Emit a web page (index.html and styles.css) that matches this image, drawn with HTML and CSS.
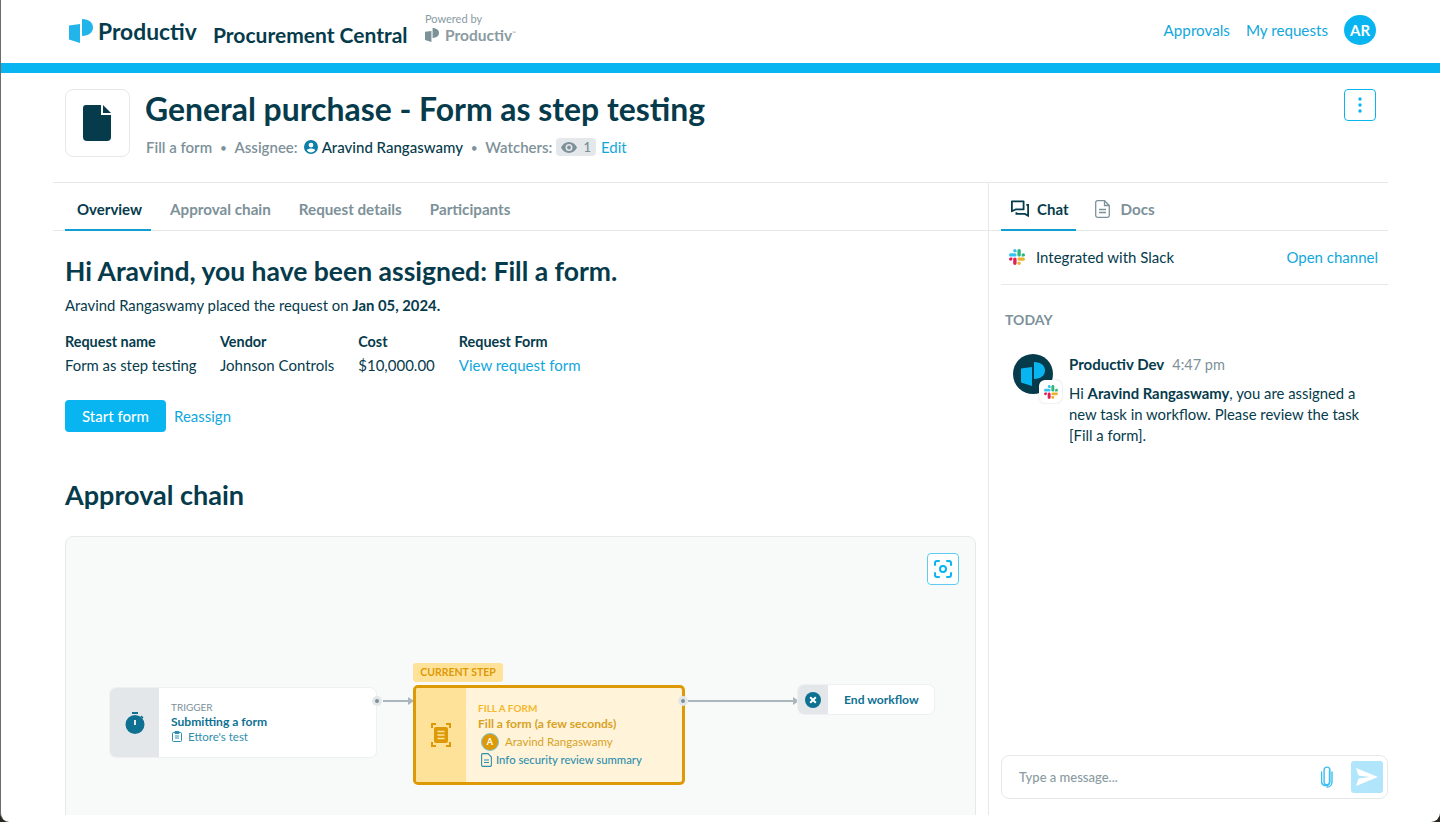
FILE: index.html
```html
<!DOCTYPE html>
<html lang="en">
<head>
    <meta charset="UTF-8">
    <meta name="viewport" content="width=device-width, initial-scale=1.0">
    <title>General purchase - Procurement Central</title>
    <link rel="stylesheet" href="styles.css">
</head>

<body>
    <svg class="defs" width="0" height="0">
        <symbol id="slack" viewBox="0 0 122.8 122.8">
            <path fill="#e01e5a" d="M25.8 77.6c0 7.1-5.8 12.9-12.9 12.9S0 84.7 0 77.6s5.8-12.9 12.9-12.9h12.9v12.9zM32.3 77.6c0-7.1 5.8-12.9 12.9-12.9s12.9 5.8 12.9 12.9v32.3c0 7.1-5.8 12.9-12.9 12.9s-12.9-5.8-12.9-12.9V77.6z"/>
            <path fill="#36c5f0" d="M45.2 25.8c-7.1 0-12.9-5.8-12.9-12.9S38.1 0 45.2 0s12.9 5.8 12.9 12.9v12.9H45.2zM45.2 32.3c7.1 0 12.9 5.8 12.9 12.9s-5.8 12.9-12.9 12.9H12.9C5.8 58.1 0 52.3 0 45.2s5.8-12.9 12.9-12.9h32.3z"/>
            <path fill="#2eb67d" d="M97 45.2c0-7.1 5.8-12.9 12.9-12.9s12.9 5.8 12.9 12.9-5.8 12.9-12.9 12.9H97V45.2zM90.5 45.2c0 7.1-5.8 12.9-12.9 12.9s-12.9-5.8-12.9-12.9V12.9C64.7 5.8 70.5 0 77.6 0s12.9 5.8 12.9 12.9v32.3z"/>
            <path fill="#ecb22e" d="M77.6 97c7.1 0 12.9 5.8 12.9 12.9s-5.8 12.9-12.9 12.9-12.9-5.8-12.9-12.9V97h12.9zM77.6 90.5c-7.1 0-12.9-5.8-12.9-12.9s5.8-12.9 12.9-12.9h32.3c7.1 0 12.9 5.8 12.9 12.9s-5.8 12.9-12.9 12.9H77.6z"/>
        </symbol>
        <symbol id="mark" viewBox="0 0 24 24">
            <path d="M0 6.500 11 5V24L0 20.500Z"/>
            <path d="M13 0C20 0 24 4 24 8.500C24 13 20 17 13 17Z"/>
        </symbol>
    </svg>

    <div class="window">
        <header class="topbar">
            <div class="brand">
                <svg class="brand-mark" width="24" height="24"><use href="#mark"/></svg>
                <span class="brand-name">Productiv</span>
            </div>
            <span class="app-name">Procurement Central</span>
            <div class="powered">
                <span class="powered-label">Powered by</span>
                <div class="powered-logo">
                    <svg width="14" height="14"><use href="#mark"/></svg>
                    <span>Productiv<sup>™</sup></span>
                </div>
            </div>
            <nav class="topnav">
                <a>Approvals</a>
                <a>My requests</a>
                <span class="avatar">AR</span>
            </nav>
        </header>
        <div class="accent"></div>

        <div class="page">
            <section class="title-row">
                <div class="title-icon">
                    <svg width="28" height="36" viewBox="0 0 28 36"><path fill="#063b4c" d="M3 0H18V10H28V32A4 4 0 0 1 24 36H4A4 4 0 0 1 0 32V3A3 3 0 0 1 3 0ZM20 0 28 8H20Z"/></svg>
                </div>
                <div class="title-text">
                    <h1>General purchase - Form as step testing</h1>
                    <div class="meta">
                        <span>Fill a form</span>
                        <span class="dot">•</span>
                        <span>Assignee:</span>
                        <svg class="meta-user" width="14" height="14" viewBox="0 0 14 14"><path fill="#0b7fa8" fill-rule="evenodd" d="M7 0a7 7 0 1 0 0 14A7 7 0 0 0 7 0ZM7 2.700a2.400 2.400 0 1 1 0 4.800 2.400 2.400 0 0 1 0-4.800ZM7 12.400c-1.800 0-3.400-.9-4.300-2.300C3 9 5.600 8.500 7 8.500s4 .5 4.300 1.600C10.400 11.500 8.800 12.400 7 12.400Z"/></svg>
                        <span class="meta-name">Aravind Rangaswamy</span>
                        <span class="dot">•</span>
                        <span>Watchers:</span>
                        <span class="watch-pill">
                            <svg width="16" height="11" viewBox="0 0 16 11"><path fill="#7d9199" fill-rule="evenodd" d="M8 0C4.500 0 1.500 2.200 0 5.500 1.500 8.800 4.500 11 8 11s6.500-2.200 8-5.500C14.500 2.200 11.500 0 8 0Zm0 9a3.500 3.500 0 1 1 0-7 3.500 3.500 0 0 1 0 7Zm0-5.400a1.900 1.900 0 1 0 0 3.800 1.900 1.900 0 0 0 0-3.800Z"/></svg>
                            1
                        </span>
                        <a class="edit">Edit</a>
                    </div>
                </div>
                <button class="kebab">
                    <svg width="4" height="16" viewBox="0 0 4 16"><circle cx="2" cy="2" r="1.700"/><circle cx="2" cy="8" r="1.700"/><circle cx="2" cy="14" r="1.700"/></svg>
                </button>
            </section>

            <div class="split">
                <main class="left">
                    <nav class="tabs">
                        <a class="tab active">Overview</a>
                        <a class="tab">Approval chain</a>
                        <a class="tab">Request details</a>
                        <a class="tab">Participants</a>
                    </nav>
                    <div class="overview">
                        <h2>Hi Aravind, you have been assigned: Fill a form.</h2>
                        <p class="placed">Aravind Rangaswamy placed the request on <b>Jan 05, 2024.</b></p>
                        <div class="facts">
                            <div><b>Request name</b><span>Form as step testing</span></div>
                            <div><b>Vendor</b><span>Johnson Controls</span></div>
                            <div><b>Cost</b><span>$10,000.00</span></div>
                            <div><b>Request Form</b><a>View request form</a></div>
                        </div>
                        <div class="actions">
                            <button class="btn">Start form</button>
                            <a>Reassign</a>
                        </div>
                        <h2 class="chain-title">Approval chain</h2>

                        <div class="canvas">
                            <button class="focus-btn">
                                <svg width="18" height="18" viewBox="0 0 18 18" fill="none" stroke="#08b5f0" stroke-width="2" stroke-linecap="round"><path d="M1 5V3A2 2 0 0 1 3 1H5M13 1H15A2 2 0 0 1 17 3V5M17 13V15A2 2 0 0 1 15 17H13M5 17H3A2 2 0 0 1 1 15V13"/><circle cx="9" cy="9" r="3"/></svg>
                            </button>

                            <div class="node trigger">
                                <div class="node-side">
                                    <svg width="20" height="22" viewBox="0 0 20 22"><path fill="#0e7192" fill-rule="evenodd" d="M7 0H13V2H7ZM10 3a9.500 9.500 0 1 1 0 19 9.500 9.500 0 0 1 0-19ZM9 8V13H11V8ZM16.500 3.500 18.500 5.500 17.300 6.700 15.300 4.700Z"/></svg>
                                </div>
                                <div class="node-body">
                                    <div class="node-kicker">TRIGGER</div>
                                    <div class="node-title">Submitting a form</div>
                                    <div class="node-line">
                                        <svg width="10" height="11" viewBox="0 0 10 11" fill="none" stroke="#2f8fae"><rect x=".5" y="1.500" width="9" height="9" rx="1"/><path d="M3 .5H7V2.500H3ZM3 5H7M3 7H7"/></svg>
                                        Ettore's test
                                    </div>
                                </div>
                            </div>
                            <span class="port port-a"></span>
                            <span class="arrow arrow-a"></span>

                            <div class="step-tag">CURRENT STEP</div>
                            <div class="node step">
                                <div class="node-side">
                                    <svg width="20" height="24" viewBox="0 0 20 24"><path fill="none" stroke="#dd9a06" stroke-width="2" d="M1 5V1H5M15 1H19V5M19 19V23H15M5 23H1V19"/><rect x="3" y="4" width="14" height="16" rx="2" fill="#dd9a06"/><path stroke="#ffe29a" stroke-width="1.400" d="M6.500 8.500H13.500M6.500 12H13.500M6.500 15.500H13.500"/></svg>
                                </div>
                                <div class="node-body">
                                    <div class="node-kicker">FILL A FORM</div>
                                    <div class="node-title">Fill a form (a few seconds)</div>
                                    <div class="node-person"><span class="mini-avatar">A</span>Aravind Rangaswamy</div>
                                    <div class="node-doc">
                                        <svg width="11" height="14" viewBox="0 0 11 14" fill="none" stroke="#2f8fae" stroke-width="1.100"><path d="M1.500.6H7L10.400 4V12A1.400 1.400 0 0 1 9 13.400H2A1.400 1.400 0 0 1 .6 12V1.500ZM3 7H8M3 9.500H8"/></svg>
                                        Info security review summary
                                    </div>
                                </div>
                            </div>
                            <span class="port port-b"></span>
                            <span class="arrow arrow-b"></span>

                            <div class="node end">
                                <div class="node-side">
                                    <svg width="16" height="16" viewBox="0 0 16 16"><circle cx="8" cy="8" r="8" fill="#0e7192"/><path stroke="#fff" stroke-width="2" d="M5.200 5.200 10.800 10.800M10.800 5.200 5.200 10.800"/></svg>
                                </div>
                                <div class="node-title">End workflow</div>
                            </div>
                        </div>
                    </div>
                </main>

                <aside class="right">
                    <nav class="tabs side-tabs">
                        <a class="tab active">
                            <svg width="18" height="18" viewBox="0 0 20 19" fill="none" stroke="#063b4c" stroke-width="2"><path d="M1 1H14V10H5L1 12Z" stroke-linejoin="round"/><path d="M17 5H19V17L15.500 15H6V13"/></svg>
                            Chat
                        </a>
                        <a class="tab">
                            <svg width="15" height="18" viewBox="0 0 15 18" fill="none" stroke="#7d9199" stroke-width="1.300"><path d="M2.500.7H9.500L14.300 5.500V15.500A1.800 1.800 0 0 1 12.500 17.300H2.500A1.800 1.800 0 0 1 .7 15.500V2.500A1.800 1.800 0 0 1 2.500.7ZM4 9.500H11M4 12.500H11M9.500.7V5.500H14.300"/></svg>
                            Docs
                        </a>
                    </nav>
                    <div class="slack-row">
                        <svg width="16" height="16"><use href="#slack"/></svg>
                        <span>Integrated with Slack</span>
                        <a>Open channel</a>
                    </div>
                    <div class="day">TODAY</div>
                    <div class="message">
                        <div class="msg-avatar">
                            <svg width="24" height="24"><use href="#mark"/></svg>
                            <span class="msg-badge"><svg width="14" height="14"><use href="#slack"/></svg></span>
                        </div>
                        <div class="msg-body">
                            <div class="msg-head"><b>Productiv Dev</b><span>4:47 pm</span></div>
                            <p>Hi <b>Aravind Rangaswamy</b>, you are assigned a new task in workflow. Please review the task [Fill a form].</p>
                        </div>
                    </div>
                    <div class="composer">
                        <span class="placeholder">Type a message...</span>
                        <svg class="clip" width="12" height="22" viewBox="0 0 12 22" fill="none" stroke="#3cbff0" stroke-width="1.400" stroke-linecap="round"><path d="M8.500 5V16A2.700 2.700 0 0 1 3.100 16V4A2.900 2.900 0 0 1 8.900 4V16.500A4.300 4.300 0 0 1 .6 16.500V6"/><path d="M11 6V16.500A5 5 0 0 1 6 21"/></svg>
                        <button class="send">
                            <svg width="22" height="18" viewBox="0 0 22 18"><path fill="#fff" d="M0 0 22 9 0 18 2.500 10.500 14 9 2.500 7.500Z"/></svg>
                        </button>
                    </div>
                </aside>
            </div>
        </div>
    </div>
</body>
</html>
```

FILE: styles.css
```css
* {
    box-sizing: border-box;
}

html, body {
    margin: 0;
    padding: 0;
    height: 822px;
    overflow: hidden;
    background: #2a2622;
}

body {
    font-family: 'Lato', sans-serif;
    font-size: 15px;
    color: #063b4c;
}

a {
    color: #12a7dc;
}

button {
    font-family: inherit;
    cursor: pointer;
}

.defs {
    display: block;
    height: 0;
}

.window {
    height: 822px;
    background: #fff;
    border-left: 1px solid #6b6b6b;
    border-radius: 0 0 9px 9px;
    overflow: hidden;
}

/* header */
.topbar {
    height: 63px;
    display: flex;
    align-items: flex-start;
    padding-left: 68px;
    padding-right: 64px;
}

.brand {
    display: flex;
    align-items: flex-start;
    padding-top: 19px;
    width: 144px;
}

.brand-mark {
    fill: #22b5ec;
}

.brand-name {
    font-size: 22.800px;
    font-weight: 700;
    color: #063b4c;
    margin-left: 5px;
    margin-top: 1px;
    line-height: 22px;
}

.app-name {
    font-size: 21px;
    font-weight: 700;
    line-height: 26px;
    margin-top: 22px;
    width: 212px;
}

.powered {
    margin-top: 13px;
    color: #8a9ba2;
}

.powered-label {
    display: block;
    font-size: 11px;
    line-height: 12px;
}

.powered-logo {
    display: flex;
    align-items: center;
    gap: 6px;
    font-size: 15.500px;
    font-weight: 700;
    line-height: 18px;
    margin-top: 1px;
}

.powered-logo svg {
    fill: #7d9199;
}

.powered-logo sup {
    font-size: 5px;
    font-weight: 400;
    line-height: 0;
}

.topnav {
    margin-left: auto;
    display: flex;
    align-items: center;
    gap: 16px;
    margin-top: 15px;
    font-size: 15.200px;
}

.avatar {
    width: 32px;
    height: 30px;
    border-radius: 50%;
    background: #08b5f0;
    color: #fff;
    font-weight: 700;
    font-size: 15px;
    display: flex;
    align-items: center;
    justify-content: center;
}

.accent {
    height: 10px;
    background: #08b5f0;
}

/* title */
.page {
    margin-left: 52px;
    width: 1335px;
}

.title-row {
    height: 110px;
    display: flex;
    padding: 16px 12px 0 12px;
    border-bottom: 1px solid #e6e9ea;
}

.title-icon {
    width: 65px;
    height: 68px;
    border: 1px solid #e6e9ea;
    border-radius: 8px;
    display: flex;
    align-items: center;
    justify-content: center;
    padding-right: 2px;
    margin-right: 15px;
}

h1 {
    margin: 0;
    font-size: 31.900px;
    font-weight: 700;
    line-height: 40px;
}

.meta {
    display: flex;
    align-items: center;
    margin-top: 7px;
    padding-left: 1px;
    color: #7d9199;
    font-weight: 600;
    height: 22px;
}

.dot {
    margin: 0 8px;
    font-size: 11px;
}

.meta-user {
    margin-left: 6px;
}

.meta-name {
    margin-left: 4px;
    color: #063b4c;
    font-weight: 500;
}

.watch-pill {
    display: flex;
    align-items: center;
    gap: 6px;
    background: #e4e8ea;
    border-radius: 4px;
    height: 18px;
    padding: 0 5px;
    margin-left: 4px;
    font-size: 13px;
}

.edit {
    margin-left: 5px;
    font-weight: 400;
}

.kebab {
    margin-left: auto;
    width: 32px;
    height: 32px;
    background: #fff;
    border: 1px solid #08b5f0;
    border-radius: 4px;
    fill: #08b5f0;
    display: flex;
    align-items: center;
    justify-content: center;
    padding: 0;
}

/* columns */
.split {
    display: flex;
    height: 632px;
    overflow: hidden;
}

.left {
    width: 936px;
    border-right: 1px solid #e6e9ea;
    overflow: hidden;
}

.right {
    flex: 1;
    display: flex;
    flex-direction: column;
}

.tabs {
    display: flex;
    height: 48px;
    gap: 4px;
    border-bottom: 1px solid #e6e9ea;
    padding-left: 12px;
}

.tab {
    display: flex;
    align-items: center;
    gap: 7px;
    padding: 4px 12px 0;
    height: 48px;
    font-size: 15.200px;
    font-weight: 700;
    color: #7d9199;
    white-space: nowrap;
}

.tab.active {
    color: #063b4c;
    border-bottom: 2px solid #0f9fd3;
    font-size: 15px;
    padding-top: 6px;
    padding-right: 9px;
    margin-right: 3px;
}

/* overview */
.overview {
    padding: 24px 12px 0 12px;
}

h2 {
    margin: 0;
    font-size: 26.500px;
    font-weight: 700;
    line-height: 32px;
}

.placed {
    margin: 8px 0 0;
    line-height: 20px;
    font-size: 14.850px;
}

.facts {
    display: flex;
    gap: 24px;
    margin-top: 17px;
}

.facts div {
    display: flex;
    flex-direction: column;
    gap: 3px;
    line-height: 20px;
    white-space: nowrap;
}

.facts div:first-child {
    width: 131px;
}

.facts div:first-child span {
    font-size: 14.850px;
}

.facts b {
    font-size: 14.400px;
}

.actions {
    display: flex;
    align-items: center;
    gap: 8px;
    margin-top: 25px;
}

.btn {
    width: 101px;
    height: 32px;
    background: #08b5f0;
    color: #fff;
    border: none;
    border-radius: 4px;
    font-size: 15px;
    font-weight: 500;
}

h2.chain-title {
    margin-top: 47px;
    font-size: 27px;
}

/* workflow canvas */
.canvas {
    position: relative;
    margin-top: 25px;
    width: 911px;
    height: 320px;
    background: #f8fafa;
    border: 1px solid #e6e9ea;
    border-radius: 8px;
}

.focus-btn {
    position: absolute;
    top: 16px;
    right: 16px;
    width: 32px;
    height: 32px;
    background: #fff;
    border: 1px solid #5ecbf3;
    border-radius: 4px;
    padding: 0;
    display: flex;
    align-items: center;
    justify-content: center;
}

.node {
    position: absolute;
    display: flex;
    background: #fff;
    border-radius: 6px;
    overflow: hidden;
    box-shadow: 0 0 0 1px #eef0f1;
}

.node-side {
    background: #e3e7ea;
    display: flex;
    align-items: center;
    justify-content: center;
    flex: none;
}

.node-body {
    padding-top: 13px;
    padding-left: 12px;
}

.node-kicker {
    font-size: 10px;
    line-height: 13px;
    color: #7d9199;
}

.node-title {
    font-size: 12.100px;
    font-weight: 700;
    line-height: 16px;
    color: #0e7192;
    padding-top: 1px;
}

.node-line {
    display: flex;
    align-items: center;
    gap: 6px;
    font-size: 11.500px;
    line-height: 15px;
    color: #2f8fae;
    padding-left: 1px;
    margin-top: -1px;
}

.trigger {
    left: 44px;
    top: 151px;
    width: 266px;
    height: 69px;
}

.trigger .node-side {
    width: 49px;
}

.trigger .node-title {
    padding-top: 0;
}

.step-tag {
    position: absolute;
    left: 347px;
    top: 126px;
    width: 90px;
    height: 19px;
    background: #ffe29a;
    border-radius: 3px;
    color: #dd9a06;
    font-size: 10.500px;
    font-weight: 700;
    line-height: 19px;
    text-align: center;
}

.step {
    left: 347px;
    top: 148px;
    width: 272px;
    height: 100px;
    background: #fff3d9;
    border: 3px solid #dd9a06;
    border-radius: 5px;
    box-shadow: none;
}

.step .node-side {
    width: 50px;
    background: #ffe29a;
}

.step .node-body {
    padding-top: 14px;
}

.step .node-kicker {
    color: #f5b92e;
    font-weight: 700;
}

.step .node-title {
    color: #d8a21f;
}

.node-person {
    display: flex;
    align-items: center;
    gap: 6px;
    font-size: 11.500px;
    color: #d8a21f;
    line-height: 19px;
    padding-left: 3px;
}

.mini-avatar {
    width: 18px;
    height: 18px;
    border-radius: 50%;
    background: #dd9a06;
    border: 1.500px solid #7cc4d8;
    color: #fff;
    font-size: 9px;
    font-weight: 700;
    display: flex;
    align-items: center;
    justify-content: center;
}

.node-doc {
    display: flex;
    align-items: center;
    gap: 4px;
    font-size: 11.300px;
    font-weight: 500;
    color: #2f8fae;
    line-height: 18px;
    padding-left: 3px;
}

.end {
    left: 732px;
    top: 148px;
    width: 136px;
    height: 29px;
    align-items: center;
}

.end .node-side {
    width: 30px;
    height: 29px;
}

.end .node-title {
    margin-left: 16px;
    padding-top: 0;
}

.port {
    position: absolute;
    width: 10px;
    height: 10px;
    border-radius: 50%;
    background: #e3e7ea;
}

.port::after {
    content: "";
    position: absolute;
    left: 3px;
    top: 3px;
    width: 4px;
    height: 4px;
    border-radius: 50%;
    background: #7d9199;
}

.port-a {
    left: 306px;
    top: 159px;
}

.port-b {
    left: 612px;
    top: 159px;
}

.arrow {
    position: absolute;
    top: 163px;
    height: 2px;
    background: #aab6bc;
}

.arrow::after {
    content: "";
    position: absolute;
    right: -1px;
    top: -3px;
    border-left: 6px solid #aab6bc;
    border-top: 4px solid transparent;
    border-bottom: 4px solid transparent;
}

.arrow-a {
    left: 317px;
    width: 30px;
}

.arrow-b {
    left: 622px;
    width: 110px;
}

/* chat */
.side-tabs {
    padding-left: 0;
    gap: 0;
    margin-left: 0;
}

.side-tabs .tab {
    padding: 3px 9px 0;
    margin-right: 10px;
    gap: 10px;
}

.side-tabs .tab.active {
    margin-left: 12px;
    gap: 8px;
    padding: 6px 8px 0 10px;
}

.slack-row {
    display: flex;
    align-items: center;
    height: 54px;
    margin-left: 12px;
    padding: 0 10px 2px 8px;
    border-bottom: 1px solid #e6e9ea;
}

.slack-row span {
    margin-left: 11px;
}

.slack-row a {
    margin-left: auto;
}

.day {
    margin: 26px 0 0 16px;
    line-height: 18px;
    font-size: 14px;
    font-weight: 700;
    color: #7d9199;
}

.message {
    display: flex;
    margin: 25px 0 0 24px;
}

.msg-avatar {
    position: relative;
    width: 40px;
    height: 40px;
    border-radius: 50%;
    background: #063b4c;
    fill: #08b5f0;
    display: flex;
    align-items: center;
    justify-content: center;
    flex: none;
}

.msg-badge {
    position: absolute;
    left: 26px;
    top: 26px;
    width: 23px;
    height: 23px;
    background: #fff;
    border-radius: 6px;
    box-shadow: 0 0 2px rgba(0, 0, 0, 0.2);
    display: flex;
    align-items: center;
    justify-content: center;
}

.msg-body {
    margin-left: 16px;
    width: 300px;
}

.msg-head {
    line-height: 20px;
}

.msg-head span {
    margin-left: 8px;
    color: #7d9199;
    font-size: 14.500px;
}

.msg-body p {
    margin: 8px 0 0;
    line-height: 21px;
    font-size: 14.850px;
}

.composer {
    margin-top: auto;
    margin-bottom: 16px;
    margin-left: 12px;
    height: 44px;
    border: 1px solid #e6e9ea;
    border-radius: 8px;
    display: flex;
    align-items: center;
    padding: 0 4px 0 17px;
}

.placeholder {
    font-size: 13px;
    font-weight: 500;
    color: #8a9ba2;
}

.clip {
    margin-left: auto;
    margin-right: 18px;
}

.send {
    width: 32px;
    height: 32px;
    background: #b1e5fb;
    border: none;
    border-radius: 3px;
    padding: 0;
    display: flex;
    align-items: center;
    justify-content: center;
}
```
